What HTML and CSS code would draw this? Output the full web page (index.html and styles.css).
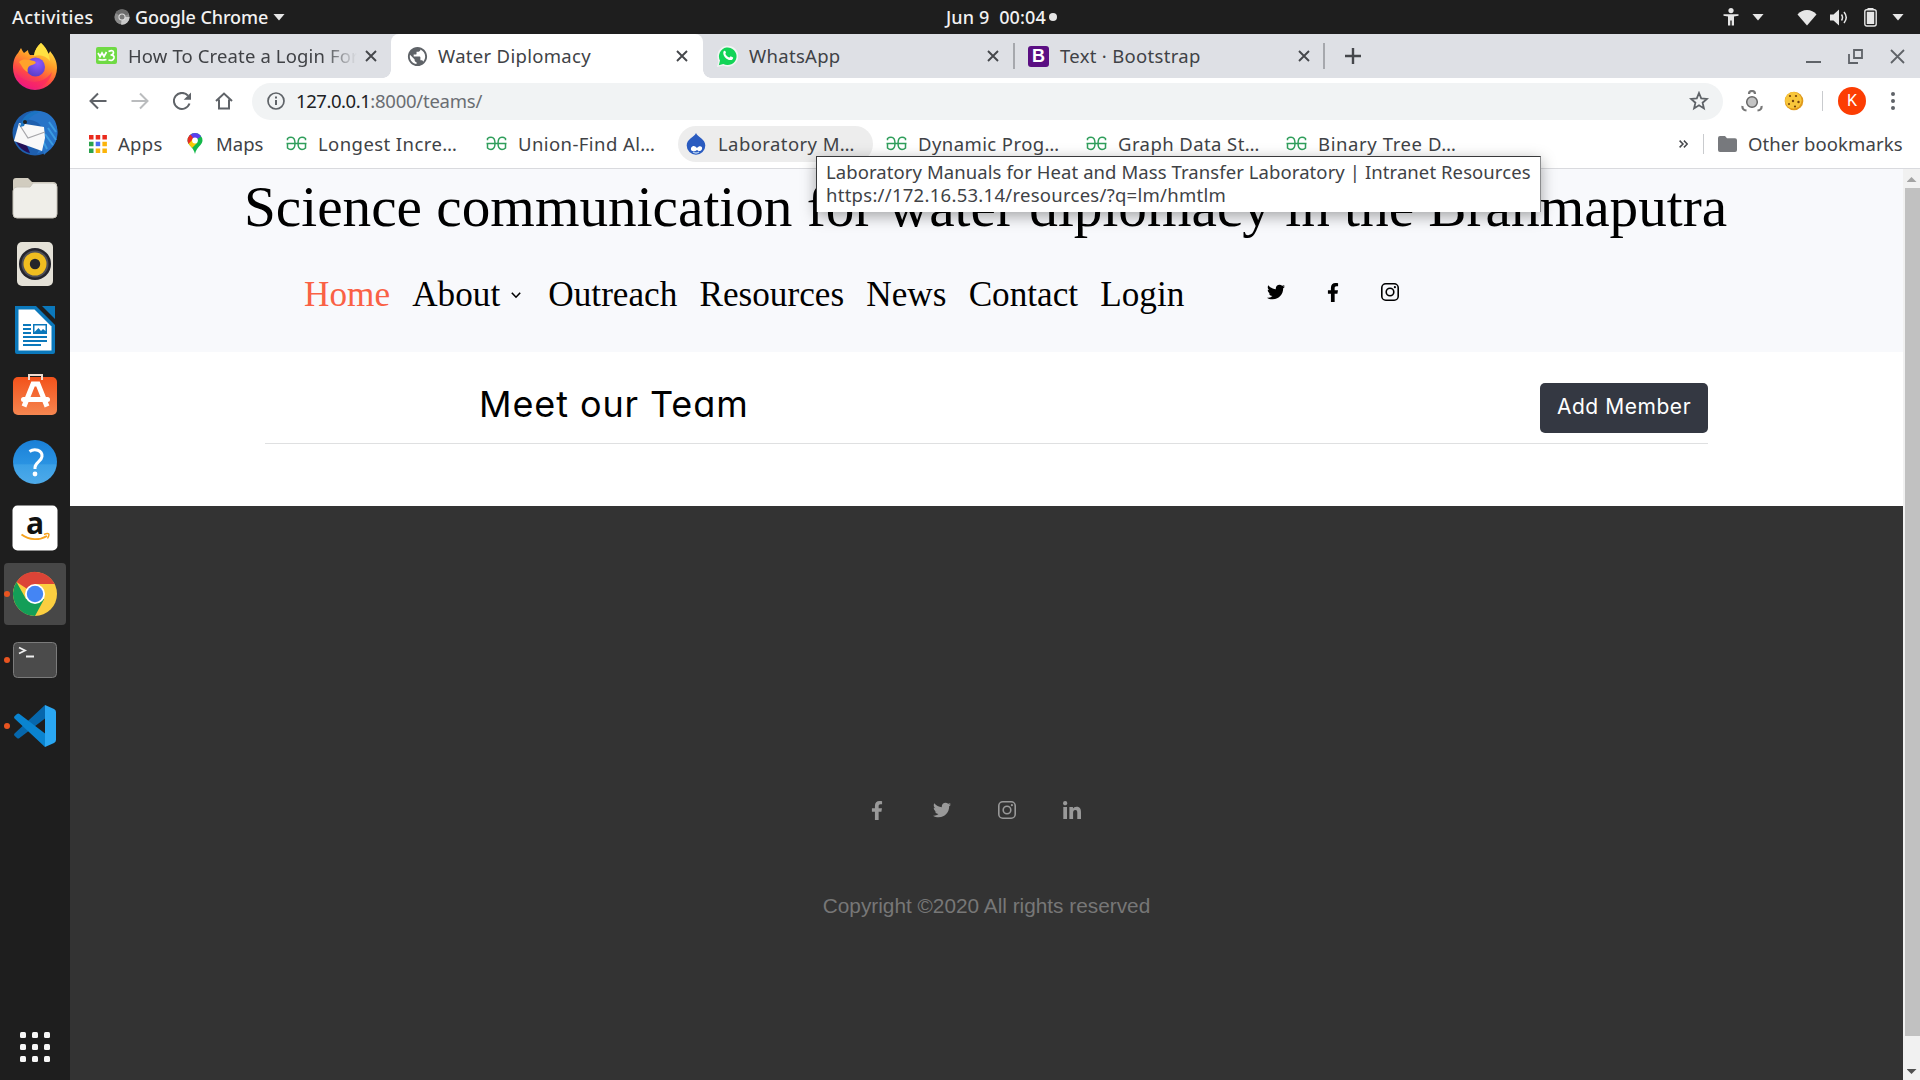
FILE: index.html
```html
<!DOCTYPE html>
<html lang="en">
<head>
<meta charset="utf-8">
<title>Water Diplomacy</title>
<link rel="stylesheet" href="styles.css">
</head>
<body>
<svg class="defs" width="0" height="0">
  <defs>
    <symbol id="close" viewBox="0 0 12 12"><path d="M1 1l10 10M11 1L1 11" fill="none" stroke="#45474b" stroke-width="1.9"/></symbol>
    <symbol id="gfg" viewBox="0 0 21 15"><path d="M.5 7.500H20.500M1.500 4.200V2.500Q3 1.200 5 1.200C7.600 1.200 9 3.500 9 7.300s-1.400 6.200-4 6.200q-2 0-3.500-1.500V7.500M19.500 4.200V2.500Q18 1.200 16 1.200C13.400 1.200 12 3.500 12 7.300s1.400 6.200 4 6.200q2 0 3.500-1.500V7.500" fill="none" stroke="#2f9e5b" stroke-width="1.500"/></symbol>
    <symbol id="facebook" viewBox="0 0 320 512"><path d="M279.14 288l14.22-92.66h-88.91v-60.13c0-25.35 12.42-50.06 52.24-50.06h40.42V6.26S260.43 0 225.36 0c-73.22 0-121.08 44.38-121.08 124.72v70.62H22.89V288h81.39v224h100.17V288z"/></symbol>
    <symbol id="twitter" viewBox="0 0 512 512"><path d="M459.37 151.716c.325 4.548.325 9.097.325 13.645 0 138.72-105.583 298.558-298.558 298.558-59.452 0-114.68-17.219-161.137-47.106 8.447.974 16.568 1.299 25.34 1.299 49.055 0 94.213-16.568 130.274-44.832-46.132-.975-84.792-31.188-98.112-72.772 6.498.974 12.995 1.624 19.818 1.624 9.421 0 18.843-1.3 27.614-3.573-48.081-9.747-84.143-51.98-84.143-102.985v-1.299c13.969 7.797 30.214 12.67 47.431 13.319-28.264-18.843-46.781-51.005-46.781-87.391 0-19.492 5.197-37.36 14.294-52.954 51.655 63.675 129.3 105.258 216.365 109.807-1.624-7.797-2.599-15.918-2.599-24.04 0-57.828 46.782-104.934 104.934-104.934 30.213 0 57.502 12.67 76.67 33.137 23.715-4.548 46.456-13.32 66.599-25.34-7.798 24.366-24.366 44.833-46.132 57.827 21.117-2.273 41.584-8.122 60.426-16.243-14.292 20.791-32.161 39.308-52.628 54.253z"/></symbol>
    <symbol id="instagram" viewBox="0 0 18 18"><rect x=".8" y=".8" width="16.4" height="16.4" rx="4" fill="none" stroke="currentColor" stroke-width="1.6"/><circle cx="9" cy="9" r="3.8" fill="none" stroke="currentColor" stroke-width="1.6"/><circle cx="13.9" cy="4.2" r="1.1"/></symbol>
    <symbol id="linkedin" viewBox="0 0 448 448"><path d="M100.28 448H7.4V148.9h92.88zM53.79 108.1C24.09 108.1 0 83.5 0 53.8a53.79 53.79 0 0 1 107.58 0c0 29.7-24.1 54.3-53.79 54.3zM447.9 448h-92.68V302.4c0-34.7-.7-79.2-48.29-79.2-48.29 0-55.69 37.7-55.69 76.7V448h-92.78V148.9h89.08v40.8h1.3c12.4-23.5 42.69-48.3 87.88-48.3 94 0 111.28 61.9 111.28 142.3V448z"/></symbol>
  </defs>
</svg>

<div class="desktop">
  <header class="topbar">
    <span class="activities">Activities</span>
    <svg class="app-icon" width="16" height="16" viewBox="0 0 16 16"><circle cx="8" cy="8" r="7.6" fill="#8b8b8b"/><path d="M8 8L1.5 4A7.6 7.6 0 0 1 15 5z" fill="#6b6b6b"/><path d="M8 8h7.6A7.6 7.6 0 0 1 7 15.6z" fill="#c9c9c9"/><circle cx="8" cy="8" r="3.6" fill="#dcdcdc"/><circle cx="8" cy="8" r="2.5" fill="#777"/></svg>
    <span class="app-name">Google Chrome</span>
    <i class="caret"></i>
    <span class="clock">Jun 9 &nbsp;00:04</span>
    <i class="clock-dot"></i>
    <div class="tray">
      <svg width="16" height="18" viewBox="0 0 16 18"><circle cx="8" cy="2.6" r="2.6" fill="#e6e6e6"/><path d="M.5 6.3h15v1.5L11 8.6V17.500H8.700V12.500H7.300V17.500H5V8.600L.5 7.800z" fill="#e6e6e6"/></svg>
      <i class="caret"></i>
      <svg class="wifi" width="20" height="17" viewBox="0 0 20 17"><path d="M.5 5.500C5-.5 15-.5 19.500 5.500L10 16.500z" fill="#e6e6e6"/></svg>
      <svg class="sound" width="19" height="17" viewBox="0 0 19 17"><path d="M0 5.500h3.500L9 .5v16L3.500 11.500H0z" fill="#e6e6e6"/><path d="M11.500 5.500q2 3 0 6M14 3q4.500 5.500 0 11" fill="none" stroke="#e6e6e6" stroke-width="1.500"/></svg>
      <svg class="battery" width="13" height="19" viewBox="0 0 13 19"><rect x="3.500" y="0" width="6" height="2" fill="#e6e6e6"/><rect x=".8" y="1.800" width="11.400" height="16.200" rx="2" fill="none" stroke="#e6e6e6" stroke-width="1.400"/><rect x="2.800" y="3.800" width="7.400" height="12.200" fill="#e6e6e6"/></svg>
      <i class="caret"></i>
    </div>
  </header>

  <div class="workspace">
    <nav class="dock">
      <div class="dock-item"><svg width="48" height="48" viewBox="0 0 48 48">
        <defs><linearGradient id="fx" x1=".8" y1="0" x2=".35" y2="1"><stop offset="0" stop-color="#fff44f"/><stop offset=".4" stop-color="#ff9c28"/><stop offset=".7" stop-color="#ff4a45"/><stop offset="1" stop-color="#e8148a"/></linearGradient><radialGradient id="fxb" cx=".6" cy=".3" r=".7"><stop offset="0" stop-color="#9059ff"/><stop offset="1" stop-color="#5a3fc9"/></radialGradient></defs>
        <path d="M30 1c4 4 6 8 7 11 1-1 2-2 2-3 4 5 7 10 7 17A22 22 0 0 1 2 26c0-7 2-12 5-15l3-5c1 2 2 4 3 5l4-3c0 2 1 4 2 5h5c0-5 2-9 6-12z" fill="url(#fx)"/><path d="M30 1c7 6 8 12 9 18-4-5-9-7-16-5 0-5 3-9 7-13z" fill="#ffe142"/><circle cx="24.500" cy="25" r="9.500" fill="url(#fxb)"/><path d="M8 20c4-4 10-2 15-1 3 1 2 3-2 4-4 1-5 4-4 7-4-1-6-6-9-10z" fill="#ffa32b"/><path d="M5 31c10 12 27 12 36-1-4 20-30 22-36 1z" fill="#f91b6b" opacity=".5"/></svg></div>
      <div class="dock-item"><svg width="48" height="48" viewBox="0 0 48 48">
        <circle cx="24" cy="25" r="22.500" fill="#1e5fae"/><path d="M12 12C20-1 37 1 44 13c5 11 2 24-7 30l-4 4-1-4-6 3 4-8V18c-4-6-12-7-18-6z" fill="#2774c8"/><path d="M38 14l7 10M37 20l8 12M34 26l8 11M32 33l4 8" stroke="#3b9be0" stroke-width="2"/><path d="M4 31c3 8 9 13 15 14l-3-7z" fill="#241056"/><path d="M8 15l25 4 1 11-3 13L3 33z" fill="#f8f8f8"/><path d="M8 16l9 14 17-6" fill="none" stroke="#a6a6aa" stroke-width="1.200"/><path d="M9 19C11 8 20 2 29 4c-8 3-14 8-16 14z" fill="#1b74c2"/><circle cx="14" cy="14" r="2" fill="#222"/></svg></div>
      <div class="dock-item"><svg width="48" height="48" viewBox="0 0 48 48">
        <path d="M2 12V7q0-3 3-3h12l4 4h21q4 0 4 4v8H2z" fill="#d1ccbf"/><path d="M2 17q0-4 4-4h13l3-4h20q4 0 4 4v27q0 4-4 4H6q-4 0-4-4z" fill="#efeee9" stroke="#c8c4ba"/></svg></div>
      <div class="dock-item"><svg width="48" height="48" viewBox="0 0 48 48">
        <rect x="6" y="2" width="36" height="44" rx="5" fill="#e4e1d7"/><circle cx="24" cy="24" r="16" fill="#25242c"/><circle cx="24" cy="24" r="13.500" fill="#505058"/><circle cx="24" cy="24" r="11.500" fill="#f0bd20"/><circle cx="24" cy="24" r="5.200" fill="#26262a"/></svg></div>
      <div class="dock-item"><svg width="48" height="48" viewBox="0 0 48 48">
        <path d="M4 0h21l19 19v27q0 2-2 2H6q-2 0-2-2z" fill="#0b78bb"/><path d="M7.500 3.500h16L40.500 20.500V44.500H7.500z" fill="#fff"/><path d="M31 0h13v13z" fill="#0b78bb"/><g fill="#0b78bb"><path d="M12 18h8v2h-8zM12 22h8v2h-8zM12 26h8v2h-8zM12 30h24v2H12zM12 34h24v2H12zM12 38h18v2H12z"/><path fill-rule="evenodd" d="M22 18h14v10H22zm1.500 1.500v6.500l4-4 2.500 3 2-2 2.500 2v-5.500z"/></g></svg></div>
      <div class="dock-item"><svg width="48" height="48" viewBox="0 0 48 48">
        <defs><linearGradient id="sw" x2="0" y2="1"><stop offset="0" stop-color="#f3521b"/><stop offset="1" stop-color="#f58650"/></linearGradient></defs>
        <rect x="2" y="5" width="44" height="38" rx="5" fill="url(#sw)"/><path d="M18 8V3h13v5" fill="none" stroke="#f3dccf" stroke-width="2"/><path d="M13 34.500L22 12h5l9 22.500" fill="none" stroke="#fff" stroke-width="5"/><path d="M12.500 27.500h24" stroke="#fff" stroke-width="5" stroke-linecap="round"/></svg></div>
      <div class="dock-item"><svg width="48" height="48" viewBox="0 0 48 48">
        <defs><linearGradient id="hp" x2="0" y2="1"><stop offset="0" stop-color="#1a7fd6"/><stop offset=".55" stop-color="#2a93e2"/><stop offset=".56" stop-color="#3ba0e6"/><stop offset="1" stop-color="#4eaae9"/></linearGradient></defs>
        <circle cx="24" cy="24" r="22" fill="url(#hp)"/><path d="M18.500 13.500c5-3.500 13-1.500 12.500 5-.5 5-7 6-7 11v1.500" fill="none" stroke="#fff" stroke-width="3"/><circle cx="24" cy="36" r="2.400" fill="#fff"/></svg></div>
      <div class="dock-item amazon"><svg width="48" height="48" viewBox="0 0 48 48">
        <rect x="1.500" y="1.500" width="45" height="45" rx="5" fill="#fff"/><text x="24" y="30" text-anchor="middle" class="amazon-a">a</text><path d="M10.500 30.500c8 6 18 6 25.500 1.500" fill="none" stroke="#f6a21d" stroke-width="1.800"/><path d="M33 30.500c3-1.500 5-1.200 5 0s-.6 2.500-1.500 4" fill="none" stroke="#f6a21d" stroke-width="1.400"/></svg></div>
      <div class="dock-item running active"><svg width="48" height="48" viewBox="0 0 48 48">
        <circle cx="24" cy="24" r="22" fill="#fbce40"/><path d="M24 24L5.500 12A22 22 0 0 1 43.700 14H24z" fill="#dc4437"/><path d="M33.200 29L24 46A22 22 0 0 1 5.500 12L15 29z" fill="#139e57"/><path d="M24 14h19.700l-10 16z" fill="#fbce40"/><circle cx="24" cy="24" r="10" fill="#fff"/><circle cx="24" cy="24" r="8.200" fill="#4485f4"/></svg></div>
      <div class="dock-item running"><svg width="48" height="48" viewBox="0 0 48 48">
        <rect x="2.500" y="6.500" width="43" height="35" rx="4" fill="#4b4b4b" stroke="#7b7b7b"/><path d="M8 11.500l6 3-6 3M15 20.500h8" fill="none" stroke="#eee" stroke-width="1.800"/></svg></div>
      <div class="dock-item running"><svg width="48" height="48" viewBox="0 0 48 48">
        <path d="M34 3L3.500 31.500q-1 1.200 0 2.200L6 36q1.200 1 2.500 0L36 15z" fill="#0667ac"/><path d="M34 45L3.500 16.500q-1-1.200 0-2.200L6 12q1.200-1 2.500 0L36 33z" fill="#0a84d0"/><path d="M34 3l9 4q2 1 2 3v28q0 2-2 3l-9 4z" fill="#2aa7f2"/></svg></div>
      <svg class="show-apps" width="30" height="30" viewBox="0 0 30 30" fill="#f8f8f8"><rect width="6" height="6" rx="1.500"/><rect x="12" width="6" height="6" rx="1.500"/><rect x="24" width="6" height="6" rx="1.500"/><rect y="12" width="6" height="6" rx="1.500"/><rect x="12" y="12" width="6" height="6" rx="1.500"/><rect x="24" y="12" width="6" height="6" rx="1.500"/><rect y="24" width="6" height="6" rx="1.500"/><rect x="12" y="24" width="6" height="6" rx="1.500"/><rect x="24" y="24" width="6" height="6" rx="1.500"/></svg>
    </nav>

    <div class="browser">
      <div class="tabs">
        <div class="tab tab-first">
          <svg width="21" height="18" viewBox="0 0 21 18"><rect width="21" height="17" rx="2" fill="#6fda44"/><path d="M2 6l2 3.500L6 6l2 3.500L10.500 5M2.500 12.500q4 1 8 0M12.500 4.500q5-2 5 1 0 2.500-3 2.500 4 0 3.500 3-1 3.500-5.500 2" fill="none" stroke="#fff" stroke-width="1.700"/></svg>
          <span class="tab-title faded">How To Create a Login Form</span>
          <svg class="close" width="12" height="12"><use href="#close"/></svg>
        </div>
        <div class="tab tab-current">
          <svg width="23" height="23" viewBox="0 0 24 24"><path fill="#5f6368" d="M12 2C6.480 2 2 6.480 2 12s4.480 10 10 10 10-4.480 10-10S17.520 2 12 2zm-1 17.930c-3.950-.49-7-3.850-7-7.930 0-.62.08-1.210.21-1.790L9 15v1c0 1.100.9 2 2 2v1.930zm6.900-2.540c-.26-.81-1-1.390-1.900-1.390h-1v-3c0-.55-.45-1-1-1H8v-2h2c.55 0 1-.45 1-1V7h2c1.100 0 2-.9 2-2v-.41c2.930 1.190 5 4.060 5 7.410 0 2.080-.8 3.970-2.100 5.390z"/></svg>
          <span class="tab-title">Water Diplomacy</span>
          <svg class="close" width="12" height="12"><use href="#close"/></svg>
        </div>
        <div class="tab tab-wa">
          <svg width="21" height="22" viewBox="0 0 21 22"><path d="M0 22l1.500-6A10.500 10.500 0 1 1 6 20.500z" fill="#f2f5f4"/><path d="M1.800 20.200l1.200-4.700A8.800 8.800 0 1 1 6.300 18.900z" fill="#12d457"/><path d="M6.500 6.500c1-1.500 2-.6 2.300.5.500 1-.6 1.500-.4 2 1 2 2.300 3 4 3.600.6 0 1-1.500 1.700-1.200l2 1c.4 1-.8 2.700-2.600 2.700-4 0-8.300-4.800-7-8.600z" fill="#fff"/></svg>
          <span class="tab-title">WhatsApp</span>
          <svg class="close" width="12" height="12"><use href="#close"/></svg>
        </div>
        <div class="tab tab-bs">
          <span class="bs-logo">B</span>
          <span class="tab-title">Text · Bootstrap</span>
          <svg class="close" width="12" height="12"><use href="#close"/></svg>
        </div>
        <svg class="new-tab" width="16" height="16" viewBox="0 0 16 16"><path d="M8 0v16M0 8h16" stroke="#45474b" stroke-width="2.400"/></svg>
        <div class="window-buttons">
          <svg width="15" height="15" viewBox="0 0 15 15"><path d="M0 13h15" stroke="#5f6368" stroke-width="2"/></svg>
          <svg width="15" height="15" viewBox="0 0 15 15"><path d="M6 1h8v8H6zM1 5v9h9" fill="none" stroke="#5f6368" stroke-width="1.800"/></svg>
          <svg width="15" height="15" viewBox="0 0 15 15"><path d="M1 1l13 13M14 1L1 14" stroke="#5f6368" stroke-width="1.800"/></svg>
        </div>
      </div>

      <div class="toolbar">
        <svg width="18" height="18" viewBox="0 0 18 18"><path d="M17.500 9H2M9 1.500L1.500 9 9 16.500" fill="none" stroke="#5f6368" stroke-width="2"/></svg>
        <svg width="18" height="18" viewBox="0 0 18 18"><path d="M.5 9H16M9 1.500L16.500 9 9 16.500" fill="none" stroke="#babcbe" stroke-width="2"/></svg>
        <svg width="18" height="18" viewBox="0 0 18 18"><path d="M16.500 11.500A8 8 0 1 1 15 3.700" fill="none" stroke="#5f6368" stroke-width="2"/><path d="M18 .5v7.300h-7.300z" fill="#5f6368"/></svg>
        <svg width="18" height="18" viewBox="0 0 18 18"><path d="M1 9l8-7.500L17 9M4 7.500V16.500h10V7.500" fill="none" stroke="#5f6368" stroke-width="2"/></svg>
        <div class="omnibox">
          <svg width="18" height="18" viewBox="0 0 18 18"><circle cx="9" cy="9" r="8" fill="none" stroke="#5f6368" stroke-width="1.700"/><path d="M9 8v5M9 4.500v2" stroke="#5f6368" stroke-width="2"/></svg>
          <div class="url"><b>127.0.0.1</b><span>:8000/teams/</span></div>
          <svg class="star" width="20" height="20" viewBox="0 0 20 20"><path d="M10 2l2.200 5.400 5.800.5-4.400 3.800 1.300 5.700-4.900-3.100-4.900 3.100 1.300-5.700L2 7.900l5.800-.5z" fill="none" stroke="#5f6368" stroke-width="1.800"/></svg>
        </div>
        <svg class="ext" width="22" height="22" viewBox="0 0 22 22"><circle cx="11" cy="12" r="5.300" fill="#c4c4c4" stroke="#666" stroke-width="1.500"/><path d="M8 4q0-3 3-3t3 3M1.500 16q-.5 4 4 4.500M20.500 16q.5 4-4 4.500" fill="none" stroke="#777" stroke-width="2.200"/></svg>
        <svg class="cookie" width="20" height="20" viewBox="0 0 20 20"><circle cx="10" cy="10" r="9.300" fill="#e09a1c"/><circle cx="9.300" cy="9.300" r="8.300" fill="#f8c63b"/><g fill="#74420d"><circle cx="6" cy="5" r="1.100"/><circle cx="12" cy="5" r="1.100"/><circle cx="9" cy="10" r="1.200"/><circle cx="14.500" cy="11" r="1.200"/><circle cx="5" cy="13" r="1"/><circle cx="11" cy="15.500" r="1.100"/></g></svg>
        <i class="divider"></i>
        <span class="avatar">K</span>
        <svg class="menu" width="4" height="18" viewBox="0 0 4 18" fill="#5f6368"><circle cx="2" cy="2" r="2"/><circle cx="2" cy="9" r="2"/><circle cx="2" cy="16" r="2"/></svg>
      </div>

      <div class="bookmarks">
        <div class="bm apps"><svg width="18" height="18" viewBox="0 0 18 18"><path d="M0 0h4.500v4.500H0zM6.700 0h4.500v4.500H6.700zM13.400 0h4.500v4.500h-4.500z" fill="#ea2a1c"/><path d="M0 6.700h4.500v4.500H0zM0 13.400h4.500v4.500H0z" fill="#2ba24c"/><path d="M6.700 6.700h4.500v4.500H6.700z" fill="#4a6cf0"/><path d="M13.400 6.700h4.500v4.500h-4.500zM6.700 13.400h4.500v4.500H6.700zM13.400 13.400h4.500v4.500h-4.500z" fill="#fbb40a"/></svg><span>Apps</span></div>
        <div class="bm maps"><svg width="16" height="21" viewBox="0 0 16 21"><defs><clipPath id="pin"><path d="M8 0a7.500 7.500 0 0 1 7.500 7.500C15.500 12 9.500 14 8 21 6.500 14 .5 12 .5 7.500A7.500 7.500 0 0 1 8 0z"/></clipPath></defs><g clip-path="url(#pin)"><path d="M0 0h16v21H0z" fill="#14b84a"/><path d="M3 0h13v2L8 7.500 2 3z" fill="#5a3ff0"/><path d="M0 0h2.500L8 7.500 0 12z" fill="#e92b25"/><path d="M0 12.500L6 6l4 4-6 6z" fill="#fbc904"/></g><circle cx="8" cy="7.500" r="2.900" fill="#fff"/></svg><span>Maps</span></div>
        <div class="bm"><svg width="21" height="15"><use href="#gfg"/></svg><span>Longest Incre…</span></div>
        <div class="bm"><svg width="21" height="15"><use href="#gfg"/></svg><span>Union-Find Al…</span></div>
        <div class="bm hovered"><svg width="20" height="22" viewBox="0 0 20 22"><path d="M10 0c1.500 4 9.300 6 9.300 12.500A9.300 9.300 0 0 1 .7 12.500C.7 6 8.500 4 10 0z" fill="#2a5bc0"/><path d="M5 15c2-3 4-2 6 0 2-3 6-2 5 1s-4 2-5 1c-2 2-7 2-6-2z" fill="#fff"/><path d="M7 19q3 2 6 0" stroke="#bcd8f5" fill="none" stroke-width="1.300"/></svg><span>Laboratory M…</span></div>
        <div class="bm"><svg width="21" height="15"><use href="#gfg"/></svg><span>Dynamic Prog…</span></div>
        <div class="bm"><svg width="21" height="15"><use href="#gfg"/></svg><span>Graph Data St…</span></div>
        <div class="bm wide"><svg width="21" height="15"><use href="#gfg"/></svg><span>Binary Tree D…</span></div>
        <svg class="more" width="9" height="8" viewBox="0 0 9 8"><path d="M.6.6L4 4 .6 7.400M4.900.6L8.300 4 4.900 7.400" fill="none" stroke="#45474b" stroke-width="1.500"/></svg>
        <i class="divider"></i>
        <svg width="19" height="16" viewBox="0 0 19 16"><path d="M0 2q0-2 2-2h5l2 2.300h8q2 0 2 2V14q0 2-2 2H2q-2 0-2-2z" fill="#77797d"/></svg>
        <span class="other">Other bookmarks</span>
        <div class="tooltip"><div class="tip-title">Laboratory Manuals for Heat and Mass Transfer Laboratory | Intranet Resources</div><div class="tip-url">https://172.16.53.14/resources/?q=lm/hmtlm</div></div>
      </div>

      <div class="viewport">
        <main class="page">
          <div class="site-header">
            <h1>Science communication for water diplomacy in the Brahmaputra</h1>
            <div class="site-nav">
              <a class="current">Home</a>
              <a class="has-menu">About<svg width="10" height="7" viewBox="0 0 10 7"><path d="M.8.8L5 5.200 9.200.8" fill="none" stroke="#000" stroke-width="1.600"/></svg></a>
              <a>Outreach</a><a>Resources</a><a>News</a><a>Contact</a><a>Login</a>
              <div class="social">
                <svg width="18" height="18"><use href="#twitter"/></svg>
                <svg width="18" height="19"><use href="#facebook"/></svg>
                <svg width="18" height="18"><use href="#instagram"/></svg>
              </div>
            </div>
          </div>
          <section class="team">
            <div class="team-head">
              <h2>Meet our Team</h2>
              <button>Add Member</button>
            </div>
          </section>
          <footer>
            <div class="footer-social">
              <svg width="18" height="19"><use href="#facebook"/></svg>
              <svg width="18" height="18"><use href="#twitter"/></svg>
              <svg width="18" height="18"><use href="#instagram"/></svg>
              <svg width="18" height="18"><use href="#linkedin"/></svg>
            </div>
            <p>Copyright ©2020 All rights reserved</p>
          </footer>
        </main>
        <div class="scrollbar"><i class="arrow up"></i><i class="thumb"></i><i class="arrow down"></i></div>
      </div>
    </div>
  </div>
</div>
</body>
</html>
```
FILE: styles.css
```css
* { box-sizing: border-box; }
body { margin: 0; overflow: hidden; font-family: "Noto Sans", "Open Sans", sans-serif; font-size: 18.5px; color: #404246; }
svg { display: block; flex: none; }
i { display: block; flex: none; }
.defs { position: absolute; }
.desktop { width: 1920px; height: 1080px; display: flex; flex-direction: column; background: #1e1e1e; }

/* system bar */
.topbar { height: 34px; flex: none; display: flex; align-items: center; color: #f2f2f2; font-size: 18px; font-weight: 500; line-height: 34px; white-space: nowrap; }
.activities { margin-left: 12px; width: 102px; letter-spacing: .4px; }
.app-icon { margin-right: 5px; }
.app-name { width: 138px; letter-spacing: -.1px; }
.caret { width: 12px; height: 7px; background: #e6e6e6; clip-path: polygon(0 0, 100% 0, 50% 100%); }
.clock { margin-left: 661px; width: 103px; letter-spacing: .15px; }
.clock-dot { width: 8px; height: 8px; border-radius: 50%; background: #e6e6e6; }
.tray { margin-left: auto; margin-right: 16px; display: flex; align-items: center; }
.tray .caret { margin-left: 13px; }
.wifi { margin-left: 33px; }
.sound { margin-left: 13px; }
.battery { margin-left: 15px; }
.tray .battery + .caret { margin-left: 15px; }

.workspace { flex: 1; display: flex; min-height: 0; }

/* dock */
.dock { width: 70px; flex: none; display: flex; flex-direction: column; align-items: center; }
.dock-item { position: relative; width: 62px; height: 62px; margin: 2px 0; border-radius: 4px; display: flex; align-items: center; justify-content: center; }
.dock-item:first-child { margin-top: 1px; }
.dock-item.active { background: #474747; }
.dock-item.running::before { content: ""; position: absolute; left: 0; top: 28px; width: 6px; height: 6px; border-radius: 50%; background: #e95420; }
.amazon-a { font: bold 30px "Open Sans", sans-serif; fill: #111; }
.show-apps { margin-top: auto; margin-bottom: 18px; }

/* browser chrome */
.browser { flex: 1; display: flex; flex-direction: column; background: #fff; min-width: 0; }
.tabs { height: 44px; flex: none; display: flex; align-items: center; background: linear-gradient(90deg, #dee0e5 100px, #fff 100px, #fff 700px, #dee0e5 700px); }
.tab { height: 44px; display: flex; align-items: center; white-space: nowrap; }
.tab-title { margin-left: 11px; padding-bottom: 2px; letter-spacing: .3px; }
.close { margin-left: auto; }
.tab-first { width: 321px; padding: 0 14px 0 26px; background: #dee0e5; border-bottom-right-radius: 8px; }
.faded { width: 230px; overflow: hidden; letter-spacing: .13px; -webkit-mask-image: linear-gradient(90deg, #000 195px, transparent 229px); mask-image: linear-gradient(90deg, #000 195px, transparent 229px); }
.tab-current { width: 312px; padding: 0 15px; background: #fff; }
.tabs { position: relative; }
.tab-current .tab-title { margin-left: 9px; }
.tab-wa { width: 312px; height: 26px; padding: 0 14px 0 14px; border-right: 2px solid #a6a8ad; }
.tab-bs { width: 310px; height: 26px; padding: 0 13px 0 13px; border-right: 2px solid #a6a8ad; }
.bs-logo { width: 21px; height: 21px; border-radius: 3px; background: #5b0f83; color: #fff; font: bold 18px/21px "Liberation Sans", sans-serif; text-align: center; }
.new-tab { margin-left: 20px; }
.window-buttons { margin-left: auto; margin-right: 15px; display: flex; gap: 27px; }
.tabs { background: #dee0e5; }
.tab-current { border-radius: 8px 8px 0 0; }
/* concave feet where the current tab meets the toolbar */
.tab-current { position: relative; }
.tab-current::before, .tab-current::after { content: ""; position: absolute; bottom: 0; width: 8px; height: 8px; }
.tab-current::before { left: -8px; background: radial-gradient(circle at 0 0, transparent 7.500px, #fff 8px); }
.tab-current::after { right: -8px; background: radial-gradient(circle at 100% 0, transparent 7.500px, #fff 8px); }

.toolbar { height: 46px; flex: none; display: flex; align-items: center; padding-left: 19px; gap: 24px; }
.omnibox { width: 1471px; height: 37px; margin-left: -5px; border-radius: 19px; background: #f1f3f4; display: flex; align-items: center; padding: 0 14px 0 15px; }
.url { margin-left: 11px; color: #6a6d72; padding-bottom: 1px; }
.url b { font-weight: 400; color: #202124; letter-spacing: -.45px; }
.url span { letter-spacing: -.25px; }
.star { margin-left: auto; }
.ext { margin-left: -6px; }
.cookie { margin-left: -3px; }
.divider { width: 1px; height: 20px; background: #c9cbce; }
.toolbar .divider { margin-left: -6px; }
.avatar { width: 28px; height: 28px; margin-left: -9px; border-radius: 50%; background: #fc3d03; color: #fff; font: 16px/28px Roboto, sans-serif; text-align: center; }
.menu { margin-left: 1px; }

.bookmarks { position: relative; height: 45px; flex: none; display: flex; align-items: center; padding: 0 0 5px 11px; border-bottom: 1px solid #d9dade; white-space: nowrap; }
.bm { width: 195px; height: 36px; margin-right: 5px; padding-left: 8px; border-radius: 18px; display: flex; align-items: center; gap: 11px; flex: none; letter-spacing: .42px; }
.bm.apps { width: 93px; gap: 11px; letter-spacing: .3px; }
.bm.maps { width: 94px; gap: 13px; letter-spacing: 0; }
.bm.hovered { background: #ededed; gap: 12px; }
.bm.wide { letter-spacing: .6px; }
.more { margin: 0 15px 0 auto; }
.bookmarks .divider { margin-right: 14px; }
.other { width: 155px; margin: 0 17px 0 11px; letter-spacing: .1px; }

.tooltip { position: absolute; left: 746px; top: 32px; width: 725px; height: 56px; padding: 3px 0 0 9px; z-index: 5; background: #fff; border: solid #38393b; border-width: 1px 1px 0 1px; border-right-color: #8b8c8e; box-shadow: 0 4px 14px rgba(0, 0, 0, .35); line-height: 23px; }
.tip-title { letter-spacing: .08px; }
.tip-url { letter-spacing: .27px; }

/* web page */
.viewport { flex: 1; display: flex; min-height: 0; }
.page { flex: 1; background: #fff; color: #000; display: flex; flex-direction: column; }
.site-header { height: 183px; flex: none; background: #f8f9fc; font-family: "Liberation Serif", serif; }
h1 { margin: 0; padding-left: 174px; font-weight: 400; font-size: 57.250px; line-height: 75px; white-space: nowrap; }
.site-nav { display: flex; align-items: center; height: 102px; padding-left: 234px; gap: 22.200px; font-size: 35.200px; }
.current { color: #fa6145; }
.has-menu { display: flex; align-items: center; gap: 11px; margin-right: 5px; }
.social { display: flex; gap: 39px; margin-left: 60px; margin-top: -6px; }
.team { height: 154px; flex: none; padding: 31px 195px 0; }
.team-head { height: 61px; border-bottom: 1px solid #dfe0e1; display: flex; justify-content: space-between; align-items: flex-start; font-family: Inter, sans-serif; font-feature-settings: "cv11"; }
h2 { margin: 0 0 0 214px; font-weight: 400; font-size: 36px; letter-spacing: .9px; line-height: 43px; white-space: nowrap; }
button { width: 168px; height: 50px; padding: 0 0 3px; border: 0; border-radius: 5px; background: #343842; color: #fff; font: inherit; font-size: 21px; font-feature-settings: "cv11"; letter-spacing: .55px; line-height: 45px; }
footer { flex: 1; background: #333; color: #999; padding-top: 295px; font-family: "Liberation Sans", sans-serif; }
.footer-social { display: flex; justify-content: center; gap: 47px; padding-right: 24px; }
footer svg, .social svg { fill: currentColor; }
footer p { margin: 74px 0 0; text-align: center; font-size: 20.800px; line-height: 24px; color: #777; }

.scrollbar { width: 17px; background: #f1f1f1; display: flex; flex-direction: column; align-items: center; }
.arrow { width: 10px; height: 5px; margin: 8px 0 6px; background: #a3a3a3; clip-path: polygon(50% 0, 100% 100%, 0 100%); }
.arrow.down { clip-path: polygon(0 0, 100% 0, 50% 100%); background: #505050; margin: auto 0 6px; }
.thumb { width: 15px; height: 848px; background: #c1c1c1; align-self: flex-end; }
```
